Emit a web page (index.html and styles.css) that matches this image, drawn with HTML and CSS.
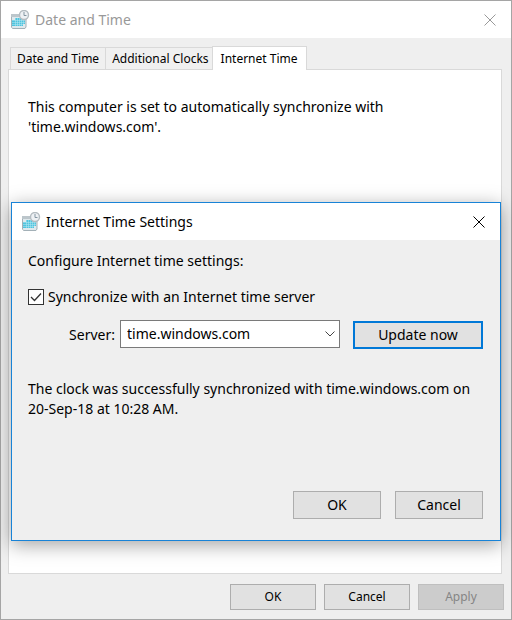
FILE: index.html
```html
<!DOCTYPE html>
<html lang="en">
<head>
<meta charset="utf-8">
<meta name="viewport" content="width=device-width, initial-scale=1">
<title>Date and Time</title>
<link rel="stylesheet" href="styles.css">
</head>
<body>
<svg width="0" height="0" class="defs" aria-hidden="true">
  <symbol id="clock-icon" viewBox="0 0 20 20">
    <path d="M1 5h15v13H3l-2-2z" fill="#dfe9ed"/>
    <path d="M1 4h10v3H1z" fill="#bcc6cb"/>
    <path d="M5 8h10v6h-2v2H2v-6h3z" fill="#4fc3de"/>
    <path d="M5.500 8v8M7.500 8v8M9.500 8v8M11.500 8v8M13.500 8v6M2 10.500h13M2 12.500h13M2 14.500h11" stroke="#b8e8f3" stroke-width=".5"/>
    <path d="M1.500 7v10l1 1.500H15l1-1.500V9" fill="none" stroke="#a3b0b7"/>
    <circle cx="14" cy="5" r="4.500" fill="#eef1f4" stroke="#b4bcc1" stroke-width="1.400"/>
    <path d="M14 2v3.500h2.500" fill="none" stroke="#8496a2"/>
  </symbol>
  <symbol id="close-icon" viewBox="0 0 12 12">
    <path d="M.5.5l11 11M11.500.5l-11 11" fill="none" stroke="currentColor"/>
  </symbol>
</svg>

<main class="window">
  <header class="titlebar titlebar-inactive">
    <svg class="app-icon"><use href="#clock-icon"/></svg>
    <h1 class="title">Date and Time</h1>
    <button class="close" type="button" aria-label="Close"><svg class="close-icon"><use href="#close-icon"/></svg></button>
  </header>

  <div class="body">
    <div class="tabs" role="tablist">
      <button class="tab" type="button" role="tab">Date and Time</button>
      <button class="tab" type="button" role="tab">Additional Clocks</button>
      <button class="tab tab-active" type="button" role="tab" aria-selected="true">Internet Time</button>
    </div>
    <section class="panel" role="tabpanel">
      <p class="text">This computer is set to automatically synchronize with<br>'time.windows.com'.</p>
    </section>
    <footer class="actions">
      <button class="button" type="button">OK</button>
      <button class="button" type="button">Cancel</button>
      <button class="button" type="button" disabled>Apply</button>
    </footer>
  </div>

  <section class="dialog" role="dialog" aria-labelledby="dialog-title">
    <header class="titlebar">
      <svg class="app-icon"><use href="#clock-icon"/></svg>
      <h2 class="title" id="dialog-title">Internet Time Settings</h2>
      <button class="close" type="button" aria-label="Close"><svg class="close-icon"><use href="#close-icon"/></svg></button>
    </header>
    <form class="settings">
      <p class="text">Configure Internet time settings:</p>
      <div class="check-row">
        <span class="check">
          <input class="check-box" type="checkbox" id="sync" checked>
          <svg class="check-mark" viewBox="0 0 16 16"><path d="M3 8l3.500 3.500L13 4.500" fill="none" stroke="#333" stroke-width="1.300"/></svg>
        </span>
        <label for="sync">Synchronize with an Internet time server</label>
      </div>
      <div class="server-row">
        <label class="server-label" for="server">Server:</label>
        <span class="combo">
          <select class="combo-select" id="server"><option>time.windows.com</option></select>
          <svg class="combo-arrow" viewBox="0 0 10 6"><path d="M.5.5L5 5 9.500.5" fill="none" stroke="#444"/></svg>
        </span>
        <button class="button button-large button-default" type="button">Update now</button>
      </div>
      <p class="text status">The clock was successfully synchronized with time.windows.com on<br>20-Sep-18 at 10:28 AM.</p>
      <div class="dialog-actions">
        <button class="button button-large" type="button">OK</button>
        <button class="button button-large" type="button">Cancel</button>
      </div>
    </form>
  </section>
</main>
</body>
</html>
```
FILE: styles.css
```css
* {
  box-sizing: border-box;
}

body {
  margin: 0;
  font: 14px/20px "Noto Sans", sans-serif;
  color: #000;
}

button,
select {
  font: inherit;
  color: inherit;
}

.defs {
  position: absolute;
}

.window {
  position: relative;
  display: flex;
  flex-direction: column;
  min-height: 100vh;
  border: 1px solid #a5a5a5;
  background: #efefef;
}

.titlebar {
  display: flex;
  align-items: center;
  height: 37px;
  padding: 0 15px 0 9px;
  background: #fff;
}

.titlebar-inactive {
  color: #999;
}

.app-icon {
  width: 20px;
  height: 20px;
}

.title {
  flex: 1;
  margin: 0 0 0 5px;
  font-size: 14px;
  font-weight: 400;
}

.close {
  display: flex;
  padding: 0;
  border: 0;
  background: none;
}

.close-icon {
  width: 12px;
  height: 12px;
}

.body {
  display: flex;
  flex: 1;
  flex-direction: column;
  padding: 8px 9px 9px 7px;
}

.tabs {
  display: flex;
  align-items: flex-end;
  padding-left: 2px;
  font-size: 12px;
}

.tab {
  height: 22px;
  padding: 0 6px;
  border: 1px solid #d9d9d9;
  border-width: 1px 0 0 1px;
  background: #f0f0f0;
  line-height: 20px;
}

/* The selected tab overlaps its neighbour and the panel's top edge. */
.tab-active {
  z-index: 1;
  height: 24px;
  margin: 0 0 -1px -3px;
  padding: 0 8px;
  border-right-width: 1px;
  background: #fff;
}

.panel {
  flex: 1;
  padding: 27px 19px;
  border: 1px solid #d9d9d9;
  background: #fff;
}

.text {
  margin: 0;
}

.actions {
  display: flex;
  justify-content: flex-end;
  gap: 8px;
  margin: 10px -2px 0 0;
  font-size: 12px;
}

.button {
  width: 86px;
  height: 26px;
  padding: 0;
  border: 1px solid #adadad;
  background: #e1e1e1;
}

.button:disabled {
  border-color: #bfbfbf;
  background: #ccc;
  color: #858585;
}

.dialog {
  position: absolute;
  top: 201px;
  right: 10px;
  left: 10px;
  border: 1px solid #1883d7;
  background: #efefef;
  box-shadow: 0 4px 18px rgba(0, 0, 0, 0.36);
}

.settings {
  padding: 11px 17px 21px 16px;
}

.check-row {
  display: flex;
  align-items: center;
  gap: 4px;
  margin-top: 16px;
}

.check {
  position: relative;
  width: 16px;
  height: 16px;
}

.check-box {
  display: block;
  width: 16px;
  height: 16px;
  margin: 0;
  border: 1px solid #333;
  background: #fff;
  appearance: none;
}

.check-mark {
  position: absolute;
  inset: 0;
  pointer-events: none;
}

.server-row {
  display: flex;
  align-items: flex-end;
  min-height: 29px;
  margin-top: 13px;
}

.server-label {
  width: 92px;
  padding-right: 5px;
  line-height: 28px;
  text-align: right;
}

.combo {
  position: relative;
  flex: 1;
  align-self: flex-start;
  margin-right: 13px;
}

.combo-select {
  display: block;
  width: 100%;
  height: 28px;
  padding: 0 6px;
  border: 1px solid #7a7a7a;
  border-radius: 0;
  background: #fff;
  appearance: none;
}

.combo-arrow {
  position: absolute;
  top: 11px;
  right: 5px;
  width: 10px;
  height: 6px;
  pointer-events: none;
}

.button-large {
  width: 88px;
  height: 28px;
}

.button-default {
  width: 130px;
  border: 2px solid #0078d7;
}

.status {
  margin-top: 30px;
}

.dialog-actions {
  display: flex;
  justify-content: flex-end;
  gap: 14px;
  margin-top: 72px;
}
```
